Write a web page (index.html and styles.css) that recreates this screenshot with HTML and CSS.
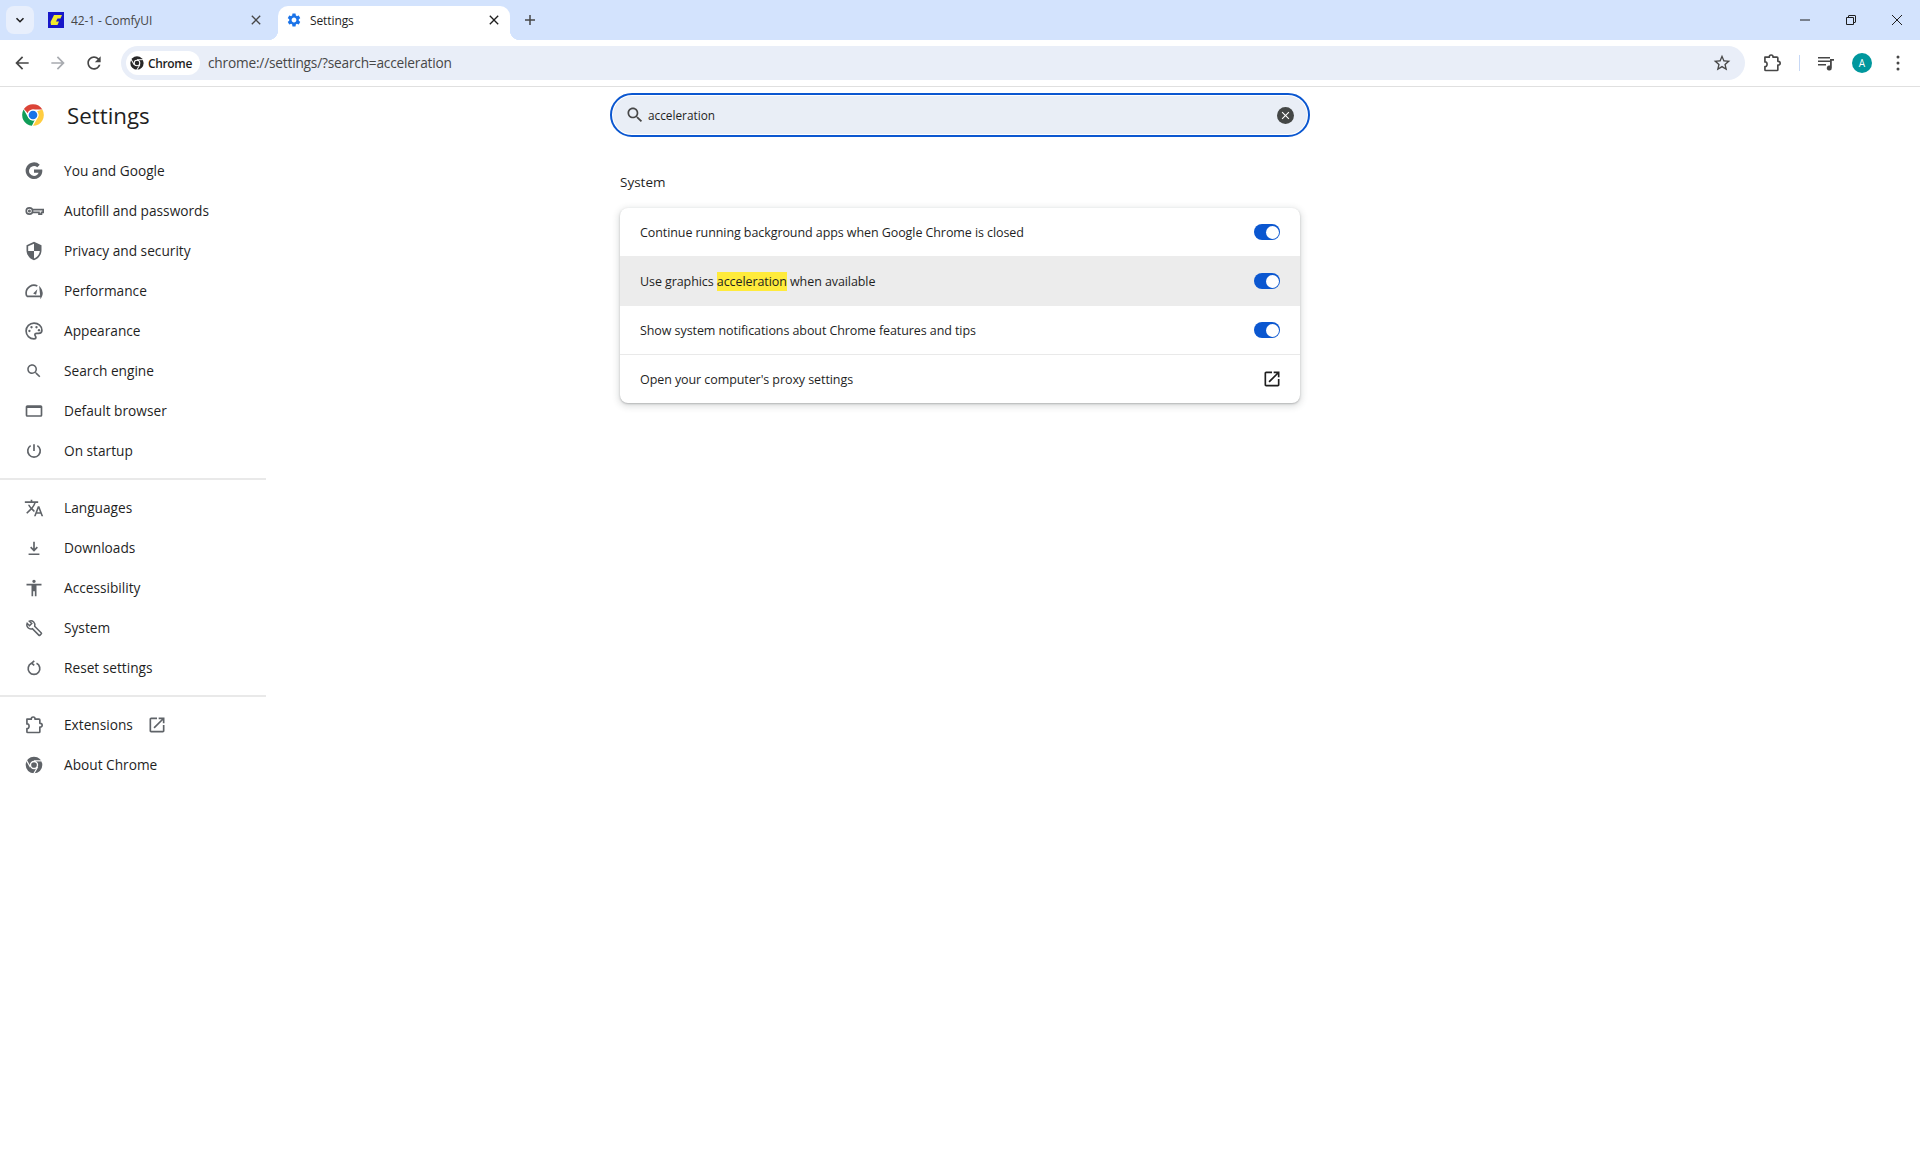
FILE: index.html
```html
<!DOCTYPE html>
<html lang="en">
<head>
<meta charset="utf-8">
<title>Settings</title>
<link rel="stylesheet" href="styles.css">
</head>
<body>
<svg class="defs" aria-hidden="true">
  <defs>
    <symbol id="open" viewBox="0 0 24 24"><path d="M19 19H5V5h7V3H5c-1.110 0-2 .9-2 2v14c0 1.100.89 2 2 2h14c1.100 0 2-.9 2-2v-7h-2v7zM14 3v2h3.590l-9.830 9.830 1.410 1.410L19 6.410V10h2V3h-7z"/></symbol>
    <symbol id="search" viewBox="0 0 24 24"><path d="M15.500 14h-.79l-.28-.27C15.410 12.590 16 11.110 16 9.500 16 5.910 13.090 3 9.500 3S3 5.910 3 9.500 5.910 16 9.500 16c1.610 0 3.090-.59 4.230-1.570l.27.28v.79l5 4.990L20.490 19l-4.990-5zm-6 0C7.010 14 5 11.990 5 9.500S7.010 5 9.500 5 14 7.010 14 9.500 11.990 14 9.500 14z"/></symbol>
    <symbol id="puzzle" viewBox="0 0 24 24"><path fill="none" stroke="currentColor" stroke-width="2" stroke-linejoin="round" d="M3.500 5h5.200c0-1.600 1-2.600 2.300-2.600s2.300 1 2.300 2.600H18c.6 0 1 .4 1 1v4c1.700-.2 2.800.8 2.800 2.200S20.700 14.600 19 14.400V20c0 .6-.4 1-1 1H4.500c-.6 0-1-.4-1-1v-3.800c1.400.2 2.600-.8 2.600-2.700S4.900 10.500 3.500 10.800z"/></symbol>
    <symbol id="mono" viewBox="0 0 24 24">
      <circle cx="12" cy="12" r="10"/>
      <circle cx="12" cy="12" r="5" fill="#fff"/>
      <circle cx="12" cy="12" r="3.400"/>
      <g stroke="#fff" stroke-width="1.400" fill="none">
        <path d="M12 7H23"/>
        <path d="M12 7H23" transform="rotate(120 12 12)"/>
        <path d="M12 7H23" transform="rotate(240 12 12)"/>
      </g>
    </symbol>
    <symbol id="x" viewBox="0 0 24 24"><path d="M19 6.410 17.590 5 12 10.590 6.410 5 5 6.410 10.590 12 5 17.590 6.410 19 12 13.410 17.590 19 19 17.590 13.410 12z"/></symbol>
  </defs>
</svg>

<header class="tabstrip">
  <div class="tabsearch"><svg class="i10" viewBox="0 0 10 10"><path d="M1.500 3.200 5 6.700l3.500-3.500" fill="none" stroke="#1f1f1f" stroke-width="1.600"/></svg></div>
  <div class="tab">
    <svg class="fav" viewBox="0 0 16 16"><rect width="16" height="16" fill="#1717c9"/><path d="M6 3h8l-1.500 3.500H9.500L8 9.500h3L9.500 13H3L2.500 10z" fill="#f2ea2d"/></svg>
    <span class="tabtitle">42-1 - ComfyUI</span>
    <svg class="tabx"><use href="#x"/></svg>
  </div>
  <div class="tab active">
    <svg class="fav" viewBox="0 0 24 24"><path fill="#1a73e8" d="M19.140 12.940c.04-.3.06-.61.06-.94 0-.32-.02-.64-.07-.94l2.030-1.580c.18-.14.23-.41.12-.61l-1.920-3.320c-.12-.22-.37-.29-.59-.22l-2.390.96c-.5-.38-1.030-.7-1.620-.94l-.36-2.540c-.04-.24-.24-.41-.48-.41h-3.840c-.24 0-.43.17-.47.41l-.36 2.540c-.59.24-1.130.57-1.620.94l-2.390-.96c-.22-.08-.47 0-.59.22L2.740 8.870c-.12.21-.08.47.12.61l2.030 1.580c-.05.3-.09.63-.09.94s.02.64.07.94l-2.030 1.580c-.18.14-.23.41-.12.61l1.920 3.320c.12.22.37.29.59.22l2.390-.96c.5.38 1.030.7 1.620.94l.36 2.540c.05.24.24.41.48.41h3.840c.24 0 .44-.17.47-.41l.36-2.540c.59-.24 1.130-.56 1.620-.94l2.390.96c.22.08.47 0 .59-.22l1.920-3.320c.12-.22.07-.47-.12-.61l-2.010-1.580zM12 15.600c-1.980 0-3.600-1.620-3.600-3.600s1.620-3.600 3.600-3.600 3.600 1.620 3.600 3.600-1.620 3.600-3.600 3.600z"/></svg>
    <span class="tabtitle">Settings</span>
    <svg class="tabx dark"><use href="#x"/></svg>
  </div>
  <svg class="plus" viewBox="0 0 12 12"><path d="M6 1v10M1 6h10" stroke="#474747" stroke-width="1.500" fill="none"/></svg>
  <div class="winctl">
    <svg class="wc" viewBox="0 0 12 12"><path d="M1 6h10" stroke="#1f1f1f" fill="none"/></svg>
    <svg class="wc" viewBox="0 0 12 12"><path d="M1.500 3.500h7v7h-7zM3.500 3.500V2c0-.3.2-.5.5-.5h6c.3 0 .5.2.5.5v6c0 .3-.2.5-.5.5H8.500" stroke="#1f1f1f" fill="none"/></svg>
    <svg class="wc" viewBox="0 0 12 12"><path d="M1 1l10 10M11 1 1 11" stroke="#1f1f1f" fill="none"/></svg>
  </div>
</header>

<nav class="toolbar">
  <svg class="tb back" viewBox="0 0 24 24"><path d="M20 11H7.830l5.590-5.590L12 4l-8 8 8 8 1.410-1.410L7.830 13H20v-2z"/></svg>
  <svg class="tb fwd" viewBox="0 0 24 24"><path d="M4 11h12.170l-5.590-5.590L12 4l8 8-8 8-1.410-1.410L16.170 13H4v-2z"/></svg>
  <svg class="tb reload" viewBox="0 0 24 24"><path d="M17.650 6.350C16.200 4.900 14.210 4 12 4c-4.420 0-7.990 3.580-7.990 8s3.570 8 7.990 8c3.730 0 6.840-2.550 7.730-6h-2.080c-.82 2.330-3.040 4-5.650 4-3.310 0-6-2.690-6-6s2.690-6 6-6c1.660 0 3.140.69 4.220 1.780L13 11h7V4l-2.350 2.350z"/></svg>
  <div class="omnibox">
    <div class="chip"><svg class="chipicon"><use href="#mono"/></svg><span>Chrome</span></div>
    <span class="url">chrome://settings/?search=acceleration</span>
    <svg class="star" viewBox="0 0 24 24"><path d="M22 9.240l-7.190-.62L12 2 9.190 8.630 2 9.240l5.460 4.730L5.820 21 12 17.270 18.180 21l-1.630-7.030L22 9.240zM12 15.400l-3.760 2.270 1-4.280-3.320-2.880 4.380-.38L12 6.100l1.710 4.040 4.380.38-3.320 2.880 1 4.280L12 15.400z"/></svg>
  </div>
  <div class="tbright">
    <svg class="tbicon"><use href="#puzzle"/></svg>
    <span class="tbsep"></span>
    <svg class="tbicon media" viewBox="0 0 20 20"><path d="M2 4h12v1.500H2zM2 7.500h12V9H2zM2 11h8v1.500H2z"/><path d="M14 6h4v1.800h-2.200V15a2.500 2.500 0 1 1-1.800-2.400z"/></svg>
    <span class="avatar">A</span>
    <svg class="kebab" viewBox="0 0 4 16"><circle cx="2" cy="2" r="1.500"/><circle cx="2" cy="8" r="1.500"/><circle cx="2" cy="14" r="1.500"/></svg>
  </div>
</nav>

<div class="page">
  <aside class="sidebar">
    <div class="brand">
      <svg class="logo" viewBox="0 0 48 48">
        <path fill="#db4437" d="M24 4a20 20 0 0 1 17.320 10H24a10 10 0 0 0-9.500 6.900L7.200 13.100A20 20 0 0 1 24 4z"/>
        <path fill="#0f9d58" d="M6.680 14 15.340 29A10 10 0 0 0 27 33.600l-5.100 10.300A20 20 0 0 1 6.680 14z"/>
        <path fill="#ffcd40" d="M41.320 14A20 20 0 0 1 24 44l8.660-15A10 10 0 0 0 31 17z"/>
        <circle cx="24" cy="24" r="10" fill="#fff"/><circle cx="24" cy="24" r="8" fill="#1a73e8"/>
      </svg>
      <h1 class="brandname">Settings</h1>
    </div>
    <ul class="menu">
      <li class="item"><svg class="ni" viewBox="0 0 24 24"><path d="M21.800 10.200H12v4h5.500c-.7 2.300-2.800 3.800-5.500 3.800a6 6 0 1 1 3.900-10.600l3-3A10 10 0 1 0 22 12c0-.6-.1-1.200-.2-1.800z"/></svg>You and Google</li>
      <li class="item"><svg class="ni line" viewBox="0 0 24 24"><circle cx="6.500" cy="12" r="3.800"/><circle cx="6.500" cy="12" r=".8"/><path d="M10.300 10.300H23v3.400h-2v2h-3v-2h-7.700"/></svg>Autofill and passwords</li>
      <li class="item"><svg class="ni" viewBox="0 0 24 24"><path d="M12 1 3 5v6c0 5.550 3.840 10.740 9 12 5.160-1.260 9-6.450 9-12V5l-9-4zm0 10.990h7c-.53 4.120-3.280 7.790-7 8.940V12H5V6.300l7-3.110v8.800z"/></svg>Privacy and security</li>
      <li class="item"><svg class="ni line" viewBox="0 0 24 24"><path d="M3.500 18.500c-.7-1.300-1-2.600-1-4A9.500 9.500 0 0 1 16 6M19.500 9c1.300 1.700 2 3.500 2 5.500 0 1.400-.3 2.700-1 4zM3.500 18.500h17"/><path d="M11 15l5-5-1.500 6.500z" fill="#5f6368" stroke="none"/></svg>Performance</li>
      <li class="item"><svg class="ni line" viewBox="0 0 24 24"><path d="M12 2.500a9.500 9.500 0 0 0 0 19c1.500 0 2.300-.9 2.300-2 0-1.500-1.300-1.700-1.300-3 0-1 .8-1.700 2-1.700h2.500c2.500 0 4-1.600 4-3.800 0-4.900-4.300-8.500-9.500-8.500z"/><circle class="dot" cx="6.500" cy="12" r="1.400"/><circle class="dot" cx="9" cy="7.500" r="1.400"/><circle class="dot" cx="15" cy="7.500" r="1.400"/><circle class="dot" cx="18" cy="11" r="1.400"/></svg>Appearance</li>
      <li class="item"><svg class="ni sm"><use href="#search"/></svg>Search engine</li>
      <li class="item"><svg class="ni" viewBox="0 0 24 24"><path d="M4 5h16a2 2 0 0 1 2 2v10a2 2 0 0 1-2 2H4a2 2 0 0 1-2-2V7a2 2 0 0 1 2-2zm0 3.500V17h16V8.500z" fill-rule="evenodd"/></svg>Default browser</li>
      <li class="item"><svg class="ni line" viewBox="0 0 24 24"><path d="M12 4v8M8 5.500a7.500 7.500 0 1 0 8 0"/></svg>On startup</li>
    </ul>
    <hr class="rule">
    <ul class="menu">
      <li class="item"><svg class="ni" viewBox="0 0 24 24"><path d="M12.870 15.070l-2.540-2.510.03-.03c1.740-1.940 2.980-4.170 3.710-6.530H17V4h-7V2H8v2H1v1.990h11.170C11.500 7.920 10.440 9.750 9 11.350 8.070 10.320 7.300 9.190 6.690 8h-2c.73 1.630 1.730 3.170 2.980 4.560l-5.090 5.020L4 19l5-5 3.110 3.110.76-2.040zM18.500 10h-2L12 22h2l1.120-3h4.750L21 22h2l-4.500-12zm-2.620 7l1.620-4.330L19.120 17h-3.240z"/></svg>Languages</li>
      <li class="item"><svg class="ni line" viewBox="0 0 24 24"><path d="M12 4.500v10M8 11l4 4 4-4M5.500 19.500h13"/></svg>Downloads</li>
      <li class="item"><svg class="ni" viewBox="0 0 24 24"><path d="M12 2c1.100 0 2 .9 2 2s-.9 2-2 2-2-.9-2-2 .9-2 2-2zm9 7h-6v13h-2v-6h-2v6H9V9H3V7h18v2z"/></svg>Accessibility</li>
      <li class="item"><svg class="ni line sm" viewBox="0 0 24 24"><path d="M21.800 18.700l-8.900-8.900c.6-2.100.2-4.200-1.300-5.700-1.600-1.600-3.900-2-5.800-1.200L9 6 6 9 2.900 5.800C2.100 7.700 2.500 10 4.100 11.600c1.500 1.500 3.600 1.900 5.700 1.300l8.900 8.900c.3.3.7.3 1 0l2.100-2.100c.3-.3.3-.7 0-1z"/></svg>System</li>
      <li class="item"><svg class="ni line" viewBox="0 0 24 24"><path d="M9 6.300a7 7 0 1 0 6 0"/><path d="M12.300 3.500 9.200 6.200l3.100 2.600"/></svg>Reset settings</li>
    </ul>
    <hr class="rule">
    <ul class="menu">
      <li class="item"><svg class="ni"><use href="#puzzle"/></svg>Extensions<svg class="openmini"><use href="#open"/></svg></li>
      <li class="item"><svg class="ni"><use href="#mono"/></svg>About Chrome</li>
    </ul>
  </aside>

  <main class="main">
    <div class="searchbox">
      <svg class="searchicon"><use href="#search"/></svg>
      <span class="searchtext">acceleration</span>
      <span class="clear"><svg class="clearx"><use href="#x"/></svg></span>
    </div>
    <h2 class="section">System</h2>
    <section class="card">
      <div class="row first"><span>Continue running background apps when Google Chrome is closed</span><span class="toggle"></span></div>
      <div class="row hover"><span>Use graphics <mark class="hl">acceleration</mark> when available</span><span class="toggle"></span></div>
      <div class="row first"><span>Show system notifications about Chrome features and tips</span><span class="toggle"></span></div>
      <div class="row sep"><span>Open your computer's proxy settings</span><svg class="ext"><use href="#open"/></svg></div>
    </section>
  </main>
</div>
</body>
</html>
```
FILE: styles.css
```css
* { box-sizing: border-box; }
html, body { margin: 0; padding: 0; }
body {
  width: 1920px;
  height: 1151px;
  overflow: hidden;
  background: #fff;
  color: #1f1f1f;
  font-family: "Open Sans", "Noto Sans", sans-serif;
  font-size: 13px;
}
.defs { width: 0; height: 0; position: absolute; }
svg { display: block; flex: none; fill: currentColor; }

/* tab strip */
.tabstrip {
  height: 40px;
  background: #d3e3fd;
  display: flex;
  align-items: flex-end;
  padding-left: 6px;
}
.tabsearch {
  width: 28px;
  height: 28px;
  margin-bottom: 6px;
  border-radius: 8px;
  background: #e8effc;
  display: flex;
  align-items: center;
  justify-content: center;
}
.i10 { width: 10px; height: 10px; }
.tab {
  height: 34px;
  width: 244px;
  display: flex;
  align-items: center;
  padding: 0 14px 6px 14px;
  font-size: 12px;
  color: #474747;
  position: relative;
}
.tab.active {
  width: 232px;
  background: #fff;
  border-radius: 10px 10px 0 0;
  color: #1f1f1f;
  padding: 0 8px 6px 8px;
}
.tab.active::before, .tab.active::after {
  content: "";
  position: absolute;
  bottom: 0;
  width: 10px;
  height: 10px;
}
.tab.active::before { left: -10px; background: radial-gradient(circle at 0 0, #d3e3fd 10px, #fff 10.500px); }
.tab.active::after { right: -10px; background: radial-gradient(circle at 100% 0, #d3e3fd 10px, #fff 10.500px); }
.fav { width: 16px; height: 16px; margin-right: 7px; }
.active .fav { margin-right: 8px; }
.tabtitle { flex: 1; white-space: nowrap; letter-spacing: -.1px; }
.tabx { width: 16px; height: 16px; color: #474747; }
.tabx.dark { color: #1f1f1f; }
.plus { width: 12px; height: 12px; margin: 0 0 14px 14px; }
.winctl { margin-left: auto; display: flex; align-self: stretch; align-items: center; padding-right: 17px; gap: 34px; }
.wc { width: 12px; height: 12px; }

/* toolbar */
.toolbar {
  height: 47px;
  background: #fff;
  border-bottom: 1px solid #e0e0e0;
  border-radius: 8px 8px 0 0;
  display: flex;
  align-items: center;
  padding-left: 12px;
}
.tb { width: 20px; height: 20px; color: #474747; }
.fwd { color: #a8abb0; margin-left: 16px; }
.reload { margin-left: 16px; }
.omnibox {
  margin-left: 17px;
  width: 1624px;
  height: 34px;
  border-radius: 17px;
  background: #e9eef8;
  display: flex;
  align-items: center;
  padding: 0 13px 0 5px;
}
.chip {
  height: 24px;
  width: 74px;
  border-radius: 12px;
  background: #fff;
  display: flex;
  align-items: center;
  padding-left: 3px;
  font-size: 12px;
  font-weight: 600;
  letter-spacing: -.35px;
  gap: 3px;
}
.chipicon { width: 16px; height: 16px; color: #282828; }
.url { margin-left: 8px; padding-bottom: 2px; font-size: 13.700px; color: #474747; letter-spacing: -.2px; flex: 1; }
.star { width: 20px; height: 20px; color: #474747; }
.tbright { display: flex; align-items: center; flex: 1; }
.tbicon { width: 20px; height: 20px; color: #474747; margin-left: 17px; }
.tbsep { width: 1px; height: 16px; background: #c7d8f5; margin-left: 17px; }
.media { margin-left: 16px; }
.avatar {
  width: 20px;
  height: 20px;
  border-radius: 50%;
  background: #00979d;
  color: #fff;
  font-size: 10px;
  display: flex;
  align-items: center;
  justify-content: center;
  margin-left: 16px;
}
.kebab { width: 4px; height: 16px; margin-left: 24px; color: #474747; }

/* page */
.page { display: grid; grid-template-columns: 266px 344px 700px; }
.sidebar { grid-column: 1; }
.main { grid-column: 3; padding-top: 6px; }
.brand { height: 64px; display: flex; align-items: center; padding-left: 20px; padding-bottom: 6px; }
.logo { width: 26px; height: 26px; margin-bottom: 2px; }
.brandname { margin: 0 0 0 21px; font-size: 22.300px; font-weight: 500; line-height: 1; }
.menu { list-style: none; margin: 0; padding: 0; }
.item {
  height: 40px;
  display: flex;
  align-items: center;
  padding: 0 0 2px 24px;
  font-size: 13.700px;
  font-weight: 500;
  color: #1f1f1f;
}
.ni { width: 20px; height: 20px; margin: 2px 20px 0 0; color: #5f6368; }
.ni.sm { width: 18px; height: 18px; margin: 2px 21px 0 1px; }
.ni.line { fill: none; stroke: #5f6368; stroke-width: 2; }
.ni .dot { fill: #5f6368; stroke: none; }
.openmini { width: 20px; height: 20px; color: #5f6368; margin: 2px 0 0 14px; }
.rule { margin: 7px 0 8px; border: 0; border-top: 2px solid #e9e9e9; height: 0; }

/* search */
.searchbox {
  height: 44px;
  border-radius: 22px;
  border: 2px solid #0b57d0;
  background: #e9eef6;
  box-shadow: inset 0 0 0 1px #fff;
  display: flex;
  align-items: center;
  padding: 0 14px 0 13px;
}
.searchicon { width: 20px; height: 20px; color: #474747; margin-right: 3px; }
.searchtext { flex: 1; font-size: 11.800px; font-weight: 500; }
.clear {
  width: 17px;
  height: 17px;
  border-radius: 50%;
  background: #444746;
  display: flex;
  align-items: center;
  justify-content: center;
}
.clearx { width: 13px; height: 13px; color: #fff; }
.section { margin: 34px 0 0 10px; font-size: 13.500px; font-weight: 400; line-height: 22px; height: 37px; }

/* card */
.card {
  margin: 0 10px;
  border-radius: 8px;
  background: #fff;
  box-shadow: 0 1px 2px rgba(60,64,67,.3), 0 2px 6px 2px rgba(60,64,67,.15);
  overflow: hidden;
}
.row {
  display: flex;
  align-items: center;
  justify-content: space-between;
  padding: 0 20px;
  font-size: 12.500px;
  letter-spacing: -.08px;
}
.row.first { height: 48px; }
.row.hover { background: #ececec; height: 50px; }
.row.sep { height: 49px; border-top: 1px solid #e9e9e9; padding-right: 18px; }
.hl { background: #ffeb3b; color: inherit; padding: 1px 0; }
.toggle {
  width: 26px;
  height: 16px;
  border-radius: 8px;
  background: #0b57d0;
  position: relative;
  display: block;
}
.toggle::after {
  content: "";
  position: absolute;
  right: 1.500px;
  top: 1.500px;
  width: 13px;
  height: 13px;
  border-radius: 50%;
  background: #fff;
}
.ext { width: 20px; height: 20px; color: #1f1f1f; }
```
